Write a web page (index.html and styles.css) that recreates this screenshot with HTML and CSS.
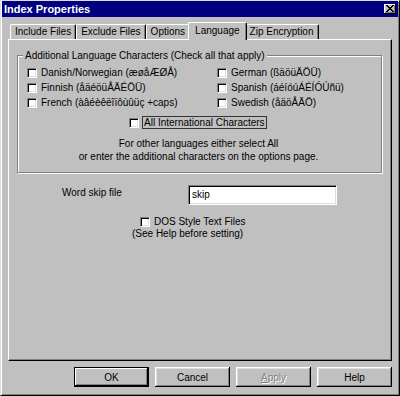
FILE: index.html
```html
<!DOCTYPE html>
<html lang="en">
<head>
<meta charset="utf-8">
<title>Index Properties</title>
<link rel="stylesheet" href="styles.css">
</head>
<body>
<div class="window">
  <div class="titlebar">
    <span class="title">Index Properties</span>
    <span class="close"><svg width="8" height="7" viewBox="0 0 8 7" shape-rendering="crispEdges"><path d="M0.5 0 L7.5 7 M7.5 0 L0.5 7" stroke="#000" stroke-width="1.8" fill="none"/></svg></span>
  </div>
  <div class="tabs">
    <div class="tab">Include Files</div>
    <div class="tab">Exclude Files</div>
    <div class="tab">Options</div>
    <div class="tab active">Language</div>
    <div class="tab">Zip Encryption</div>
  </div>
  <div class="panel">
    <div class="group">
      <span class="legend">Additional Language Characters (Check all that apply)</span>
      <div class="grid">
        <div class="check"><span class="cb"></span>Danish/Norwegian (æøåÆØÅ)</div>
        <div class="check"><span class="cb"></span>German (ßäöüÄÖÜ)</div>
        <div class="check"><span class="cb"></span>Finnish (åäéöüÅÄÉÖÜ)</div>
        <div class="check"><span class="cb"></span>Spanish (áéíóúÁÉÍÓÚñü)</div>
        <div class="check"><span class="cb"></span>French (àâéèêëîïôùûüç +caps)</div>
        <div class="check"><span class="cb"></span>Swedish (åäöÅÄÖ)</div>
      </div>
      <div class="check allrow"><span class="cb"></span><span class="focus">All International Characters</span></div>
      <p class="note">For other languages either select All<br>or enter the additional characters on the options page.</p>
    </div>
    <div class="skiprow">
      <span class="skiplabel">Word skip file</span>
      <span class="input">skip</span>
    </div>
    <div class="check dosrow"><span class="cb"></span>DOS Style Text Files</div>
    <div class="doshelp">(See Help before setting)</div>
  </div>
  <div class="buttons">
    <div class="btn default">OK</div>
    <div class="btn">Cancel</div>
    <div class="btn disabled"><u>A</u>pply</div>
    <div class="btn">Help</div>
  </div>
</div>
</body>
</html>
```

FILE: styles.css
```css
* {
  box-sizing: border-box;
}

html,
body {
  margin: 0;
  padding: 0;
}

body {
  width: 400px;
  height: 396px;
  overflow: hidden;
  background: #c0c0c0;
  font-family: "Liberation Sans", Arial, sans-serif;
  font-size: 10px;
  color: #000;
}

.window {
  width: 400px;
  height: 396px;
  background: #c0c0c0;
  border: 1px solid;
  border-color: #dfdfdf #000 #000 #dfdfdf;
  box-shadow: inset 1px 1px 0 #fff, inset -1px -1px 0 #808080;
  padding: 0 1px;
  display: flex;
  flex-direction: column;
}

.titlebar {
  height: 16px;
  flex: none;
  background: #000080;
  color: #fff;
  display: flex;
  justify-content: space-between;
  align-items: flex-start;
}

.title {
  font-weight: bold;
  font-size: 11px;
  line-height: 16px;
  padding-left: 2px;
}

.close {
  width: 12px;
  height: 10px;
  margin: 3px 2px 0 0;
  background: #c0c0c0;
  box-shadow: inset -1px -1px 0 #000, inset 1px 1px 0 #fff, inset -2px -2px 0 #808080;
  display: flex;
  align-items: center;
  justify-content: center;
}

.close svg {
  display: block;
  margin: 0 1px 1px 0;
}

.tabs {
  display: flex;
  align-items: flex-end;
  height: 17px;
  flex: none;
  margin: 5px 0 0 8px;
  position: relative;
  z-index: 1;
}

.tab {
  height: 15px;
  padding: 0 4px;
  line-height: 14px;
  white-space: nowrap;
  background: #c0c0c0;
  border-top: 1px solid #fff;
  border-left: 1px solid #fff;
  border-right: 1px solid #000;
  border-top-left-radius: 2px;
  border-top-right-radius: 2px;
  box-shadow: inset -1px 0 0 #808080;
}

.tab.active {
  height: 18px;
  margin: 0 -2px -1px;
  padding: 1px 6px 0;
  position: relative;
  z-index: 2;
}

.panel {
  flex: none;
  margin-left: 6px;
  width: 384px;
  height: 322px;
  border-top: 1px solid #fff;
  border-left: 1px solid #fff;
  border-right: 1px solid #000;
  border-bottom: 1px solid #000;
  box-shadow: inset -1px -1px 0 #808080;
}

.group {
  position: relative;
  margin: 15px 0 0 8px;
  width: 365px;
  border: 1px solid #808080;
  box-shadow: 1px 1px 0 #fff, inset 1px 1px 0 #fff;
  padding: 9px 0 9px 9px;
}

.legend {
  position: absolute;
  top: -7px;
  left: 5px;
  padding: 0 2px;
  line-height: 13px;
  background: #c0c0c0;
  white-space: nowrap;
}

.grid {
  display: grid;
  grid-template-columns: 190px auto;
}

.check {
  display: flex;
  align-items: center;
  gap: 4px;
  height: 15px;
  white-space: nowrap;
}

.cb {
  flex: none;
  width: 10px;
  height: 10px;
  background: #fff;
  border-top: 1px solid #808080;
  border-left: 1px solid #808080;
  border-right: 1px solid #fff;
  border-bottom: 1px solid #fff;
  box-shadow: inset 1px 1px 0 #000, inset -1px -1px 0 #dfdfdf;
}

.allrow {
  margin: 5px 0 0 102px;
  gap: 3px;
}

.focus {
  border: 1px solid #333;
  padding: 0 1px;
  line-height: 11px;
}

.note {
  margin: 7px 11px 0 0;
  text-align: center;
  line-height: 13px;
}

.skiprow {
  display: flex;
  margin: 12px 0 0 53px;
}

.skiplabel {
  width: 126px;
  padding-top: 1px;
  line-height: 13px;
}

.input {
  width: 149px;
  height: 20px;
  background: #fff;
  border-top: 1px solid #808080;
  border-left: 1px solid #808080;
  border-right: 1px solid #fff;
  border-bottom: 1px solid #fff;
  box-shadow: inset 1px 1px 0 #000, inset -1px -1px 0 #dfdfdf;
  padding-left: 3px;
  line-height: 17px;
}

.dosrow {
  margin: 10px 0 0 131px;
  height: 13px;
}

.doshelp {
  margin-left: 123px;
  line-height: 11px;
}

.buttons {
  display: flex;
  justify-content: flex-end;
  gap: 6px;
  margin-top: 6px;
  padding-right: 6px;
}

.btn {
  width: 75px;
  height: 20px;
  display: flex;
  align-items: center;
  justify-content: center;
  box-shadow: inset -1px -1px 0 #000, inset 1px 1px 0 #fff, inset -2px -2px 0 #808080, inset 2px 2px 0 #dfdfdf;
}

.btn.default {
  border: 1px solid #000;
  box-shadow: inset -1px -1px 0 #000, inset 1px 1px 0 #fff, inset -2px -2px 0 #808080;
}

.btn.disabled {
  color: #808080;
  text-shadow: 1px 1px 0 #fff;
}
```
